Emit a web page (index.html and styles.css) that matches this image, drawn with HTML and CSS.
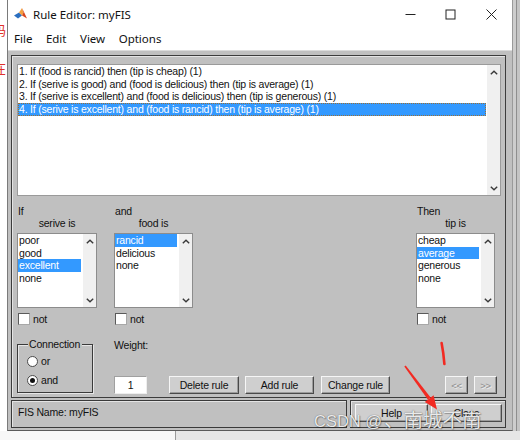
FILE: index.html
```html
<!DOCTYPE html>
<html>
<head>
<meta charset="utf-8">
<title>Rule Editor: myFIS</title>
<link rel="stylesheet" href="styles.css">
</head>
<body>
<div class="screen">
  <div class="left-strip">
    <span class="red-glyph g1">码</span>
    <span class="red-glyph g2">在</span>
  </div>
  <div class="window">
    <div class="titlebar">
      <svg class="app-icon" width="13" height="13" viewBox="0 0 13 13">
        <polygon points="0,8.5 5,5.5 8,8.5 4,11.5" fill="#2b6fc0"/>
        <polygon points="5,5.5 8,1 9.5,5.5 8,8.5" fill="#f3a040"/>
        <polygon points="8,1 10,5 13,11.5 8,8.5 9.5,5.5" fill="#d9461c"/>
      </svg>
      <span class="title">Rule Editor: myFIS</span>
      <div class="controls">
        <div class="ctl"><svg width="11" height="11" viewBox="0 0 11 11"><line x1="0.5" y1="5.5" x2="10.5" y2="5.5" stroke="#222" stroke-width="1"/></svg></div>
        <div class="ctl"><svg width="11" height="11" viewBox="0 0 11 11"><rect x="1" y="1" width="9" height="9" fill="none" stroke="#222" stroke-width="1"/></svg></div>
        <div class="ctl close"><svg width="11" height="11" viewBox="0 0 11 11"><path d="M0.5 0.5 L10.5 10.5 M10.5 0.5 L0.5 10.5" stroke="#222" stroke-width="1"/></svg></div>
      </div>
    </div>
    <div class="menubar">
      <span>File</span><span>Edit</span><span>View</span><span>Options</span>
    </div>
    <div class="client">
      <div class="main-panel">
        <div class="listbox rule-list">
          <div class="items">
            <div class="item">1. If (food is rancid) then (tip is cheap) (1)</div>
            <div class="item">2. If (serive is good) and (food is delicious) then (tip is average) (1)</div>
            <div class="item">3. If (serive is excellent) and (food is delicious) then (tip is generous) (1)</div>
            <div class="item sel focus">4. If (serive is excellent) and (food is rancid) then (tip is average) (1)</div>
          </div>
          <div class="scrollbar">
            <svg width="8" height="5" viewBox="0 0 8 5"><polyline points="0.8,4.3 4,1.2 7.2,4.3" fill="none" stroke="#3a3a3a" stroke-width="1.4"/></svg>
            <svg width="8" height="5" viewBox="0 0 8 5"><polyline points="0.8,0.7 4,3.8 7.2,0.7" fill="none" stroke="#3a3a3a" stroke-width="1.4"/></svg>
          </div>
        </div>

        <div class="columns">
          <div class="col">
            <div class="col-head"><div class="h1">If</div><div class="h2">serive is</div></div>
            <div class="listbox small">
              <div class="items">
                <div class="item">poor</div>
                <div class="item">good</div>
                <div class="item sel">excellent</div>
                <div class="item">none</div>
              </div>
              <div class="scrollbar">
                <svg width="8" height="5" viewBox="0 0 8 5"><polyline points="0.8,4.3 4,1.2 7.2,4.3" fill="none" stroke="#3a3a3a" stroke-width="1.4"/></svg>
                <svg width="8" height="5" viewBox="0 0 8 5"><polyline points="0.8,0.7 4,3.8 7.2,0.7" fill="none" stroke="#3a3a3a" stroke-width="1.4"/></svg>
              </div>
            </div>
            <div class="check"><span class="box"></span><span>not</span></div>
          </div>

          <div class="col col2">
            <div class="col-head"><div class="h1">and</div><div class="h2">food is</div></div>
            <div class="listbox small">
              <div class="items">
                <div class="item sel">rancid</div>
                <div class="item">delicious</div>
                <div class="item">none</div>
              </div>
              <div class="scrollbar">
                <svg width="8" height="5" viewBox="0 0 8 5"><polyline points="0.8,4.3 4,1.2 7.2,4.3" fill="none" stroke="#3a3a3a" stroke-width="1.4"/></svg>
                <svg width="8" height="5" viewBox="0 0 8 5"><polyline points="0.8,0.7 4,3.8 7.2,0.7" fill="none" stroke="#3a3a3a" stroke-width="1.4"/></svg>
              </div>
            </div>
            <div class="check"><span class="box"></span><span>not</span></div>
          </div>

          <div class="col col3">
            <div class="col-head"><div class="h1">Then</div><div class="h2">tip is</div></div>
            <div class="listbox small">
              <div class="items">
                <div class="item">cheap</div>
                <div class="item sel">average</div>
                <div class="item">generous</div>
                <div class="item">none</div>
              </div>
              <div class="scrollbar">
                <svg width="8" height="5" viewBox="0 0 8 5"><polyline points="0.8,4.3 4,1.2 7.2,4.3" fill="none" stroke="#3a3a3a" stroke-width="1.4"/></svg>
                <svg width="8" height="5" viewBox="0 0 8 5"><polyline points="0.8,0.7 4,3.8 7.2,0.7" fill="none" stroke="#3a3a3a" stroke-width="1.4"/></svg>
              </div>
            </div>
            <div class="check"><span class="box"></span><span>not</span></div>
          </div>
        </div>

        <div class="bottom-row">
          <div class="group">
            <span class="legend">Connection</span>
            <div class="radio r1"><span class="circle"></span><span>or</span></div>
            <div class="radio r2"><span class="circle on"></span><span>and</span></div>
          </div>
          <div class="weight">
            <span>Weight:</span>
            <div class="input">1</div>
          </div>
          <div class="btn b-del">Delete rule</div>
          <div class="btn b-add">Add rule</div>
          <div class="btn b-chg">Change rule</div>
          <div class="btn nav b-prev">&lt;&lt;</div>
          <div class="btn nav b-next">&gt;&gt;</div>
        </div>
      </div>

      <div class="status-row">
        <div class="status-box">FIS Name: myFIS</div>
        <div class="actions">
          <div class="btn b-help">Help</div>
          <div class="btn b-close">Close</div>
        </div>
      </div>
    </div>
  </div>
  <div class="right-strip"></div>
</div>
<div class="bottom-strip"></div>

<svg class="annot" width="520" height="440" viewBox="0 0 520 440">
  <polygon points="404.3,366.4 405.7,365.6 430.6,397.4 427.8,399.6" fill="#f22a22"/>
  <polygon points="437,409.5 433.6,395.3 424.8,401.9" fill="#f22a22"/>
  <path d="M441.6 343 Q443.4 352 444.4 364" fill="none" stroke="#f22a22" stroke-width="2.6" stroke-linecap="round"/>
</svg>
<div class="watermark"><span class="wm-lat">CSDN @</span><span class="wm-cjk">、南城不南</span></div>
</body>
</html>
```

FILE: styles.css
```css
* { box-sizing: border-box; }
html, body { margin: 0; padding: 0; }
body {
  width: 520px;
  height: 440px;
  overflow: hidden;
  background: #ffffff;
  font-family: "Liberation Sans", Arial, sans-serif;
  font-size: 10.5px;
  letter-spacing: -0.2px;
  color: #111;
  position: relative;
}

.screen { display: flex; height: 431px; }

.left-strip {
  width: 7px;
  flex: none;
  background: #fff;
  overflow: hidden;
  display: flex;
  flex-direction: column;
}
.red-glyph {
  color: #e0302a;
  font: 13px/13px "Noto Sans CJK SC", sans-serif;
  letter-spacing: 0;
  margin-left: -7px;
  white-space: nowrap;
}
.g1 { margin-top: 23px; }
.g2 { margin-top: 25px; }

.window {
  width: 506px;
  flex: none;
  border-left: 1px solid #7a7a7a;
  border-right: 1px solid #9a9a9a;
  border-bottom: 1px solid #5a5a5a;
  display: flex;
  flex-direction: column;
  background: #fff;
}

.titlebar {
  height: 28px;
  display: flex;
  align-items: center;
  padding-left: 6px;
  background: #fff;
}
.app-icon { flex: none; margin-right: 6px; margin-top: -1px; }
.title {
  font-family: "Noto Sans", "Liberation Sans", sans-serif;
  font-size: 11.5px;
  letter-spacing: 0;
  color: #111;
}
.controls { margin-left: auto; display: flex; height: 28px; }
.ctl { width: 40px; height: 28px; display: flex; align-items: center; justify-content: center; }
.ctl.close { width: 42px; }

.menubar {
  height: 22px;
  display: flex;
  align-items: center;
  gap: 13.5px;
  padding-left: 6px;
  padding-bottom: 1px;
  font-family: "Noto Sans", "Liberation Sans", sans-serif;
  font-size: 11.5px;
  letter-spacing: 0;
  color: #111;
  background: #fff;
}

.client {
  flex: 1;
  background: #c0c0c0;
  border-top: 1px solid #dcdcdc;
  padding: 4px 6px 2px 3px;
  display: flex;
  flex-direction: column;
}

.main-panel {
  height: 343px;
  border: 1px solid #3c3c3c;
  box-shadow: inset 1px 1px 0 #e4e4e4;
  padding: 8px 4px 0 5px;
  display: flex;
  flex-direction: column;
}

/* listboxes */
.listbox {
  display: flex;
  background: #fff;
  border: 1px solid #9a9a9a;
}
.listbox .items { flex: 1; min-width: 0; }
.item {
  height: 12.7px;
  line-height: 12.7px;
  padding-left: 1px;
  white-space: nowrap;
  overflow: hidden;
}
.item.sel { background: #3399ff; color: #fff; }
.item.focus { outline: 1px dotted #9a7036; outline-offset: -1px; }
.scrollbar {
  width: 13px;
  flex: none;
  background: #f0f0f0;
  display: flex;
  flex-direction: column;
  justify-content: space-between;
  align-items: center;
  padding: 5px 0 4px;
}
.rule-list { height: 132px; }
.rule-list .items { padding-right: 1px; }

.columns { display: flex; margin-top: 9px; }
.col { width: 80px; display: flex; flex-direction: column; }
.col2 { width: 79px; margin-left: 17px; }
.col3 { width: 79px; margin-left: auto; margin-right: 6px; }
.col-head { height: 24px; margin-bottom: 4px; line-height: 12px; }
.col-head .h1 { padding-left: 1px; }
.col-head .h2 { text-align: center; }
.listbox.small { height: 75px; border-color: #8c8c8c; }
.listbox.small .items { padding-right: 2px; }

.check {
  margin-top: 5px;
  height: 12px;
  display: flex;
  align-items: center;
  padding-left: 1px;
  gap: 3px;
}
.check .box {
  width: 12px;
  height: 12px;
  background: #fff;
  border: 1px solid;
  border-color: #5a5a5a #a8a8a8 #a8a8a8 #5a5a5a;
}

/* bottom row */
.bottom-row {
  margin-top: 14px;
  height: 55px;
  display: flex;
  align-items: flex-end;
}
.group {
  width: 76px;
  height: 49px;
  border: 1px solid #3a3a3a;
  box-shadow: 1px 1px 0 #e6e6e6, inset 1px 1px 0 #e6e6e6;
  align-self: flex-end;
  margin-bottom: 1px;
  display: flex;
  flex-direction: column;
}
.legend {
  display: block;
  width: fit-content;
  margin: -7px 0 0 10px;
  padding: 0 2px 0 1px;
  line-height: 12px;
  background: #c0c0c0;
}
.radio {
  height: 12px;
  display: flex;
  align-items: center;
  padding-left: 9px;
  gap: 3px;
}
.r1 { margin-top: 5px; }
.r2 { margin-top: 7px; }
.circle {
  width: 11px;
  height: 11px;
  border-radius: 50%;
  background: #fff;
  border: 1px solid #4a4a4a;
  display: flex;
  align-items: center;
  justify-content: center;
}
.circle.on::after {
  content: "";
  width: 5px;
  height: 5px;
  border-radius: 50%;
  background: #111;
}

.weight {
  margin-left: 21px;
  width: 33px;
  height: 55px;
  display: flex;
  flex-direction: column;
  justify-content: space-between;
  line-height: 12px;
}
.input {
  height: 18px;
  background: #fff;
  border: 1px solid;
  border-color: #a0a0a0 #eeeeee #eeeeee #a0a0a0;
  display: flex;
  align-items: center;
  justify-content: center;
}

.btn {
  height: 18px;
  display: flex;
  align-items: center;
  justify-content: center;
  background: #cfcfcf;
  border: 1px solid;
  border-color: #f6f6f6 #4a4a4a #4a4a4a #f6f6f6;
  box-shadow: inset -1px -1px 0 #9c9c9c;
  white-space: nowrap;
  color: #111;
}
.b-del { margin-left: 22px; width: 70px; }
.b-add { margin-left: 6px; width: 69px; }
.b-chg { margin-left: 7px; width: 69px; }
.b-prev { margin-left: 55px; width: 23px; }
.b-next { margin-left: 6px; width: 23px; }
.nav { color: #8e8e8e; text-shadow: 1px 1px 0 #eeeeee; font-size: 9.5px; }

/* status row */
.status-row { margin-top: 2px; height: 28px; display: flex; }
.status-box {
  width: 336px;
  border: 1px solid #3a3a3a;
  box-shadow: inset 1px 1px 0 #e4e4e4;
  padding: 5px 0 0 6px;
  line-height: 12px;
}
.actions {
  margin-left: 3px;
  width: 156px;
  border: 1px solid #3a3a3a;
  box-shadow: inset 1px 1px 0 #e4e4e4;
  display: flex;
  padding: 3px 0 0 4px;
}
.b-help { width: 73px; }
.b-close { width: 71px; margin-left: 3px; }

.right-strip {
  flex: 1;
  background: linear-gradient(to right, #cdcdcd 0 3px, #8e8e8e 3px 4px, #c4c4c4 4px);
}
.bottom-strip {
  height: 9px;
  background: linear-gradient(to right, #f7f7f7 0 175px, #9a9a9a 175px 176px, #e6e6e6 176px);
}

/* overlays */
.annot { position: absolute; left: 0; top: 0; pointer-events: none; }
.watermark {
  position: absolute;
  left: 314px;
  top: 404px;
  display: flex;
  align-items: baseline;
  color: rgba(255, 255, 255, 0.88);
  text-shadow: 0 0 1px rgba(40, 40, 40, 0.75), 1px 1px 1px rgba(0, 0, 0, 0.25);
  letter-spacing: 0;
  white-space: nowrap;
  pointer-events: none;
}
.wm-lat { font-family: "Liberation Sans", sans-serif; font-size: 16.5px; }
.wm-cjk { font-family: "Noto Sans CJK SC", sans-serif; font-size: 19.5px; margin-left: 2px; }
```
